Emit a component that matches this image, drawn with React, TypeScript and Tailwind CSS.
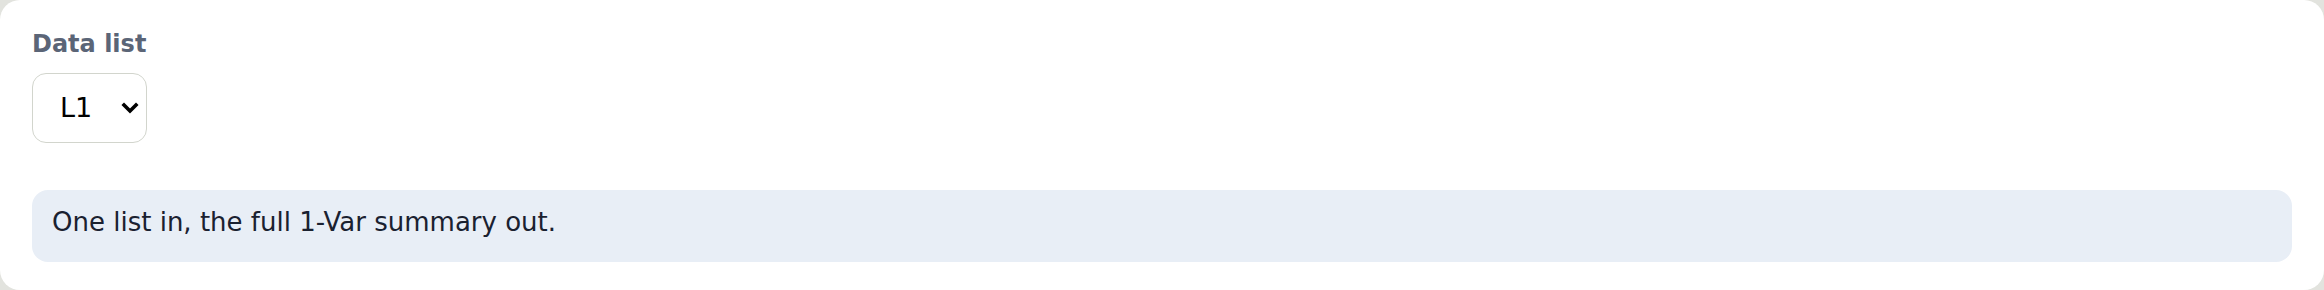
import { useState } from 'react'

export default function App() {
  const [list, setList] = useState('L1')

  return (
    <div className="w-full h-[290px] bg-[#e2e3de]" style={{ fontFamily: '"DejaVu Sans", sans-serif' }}>
      <div className="h-full rounded-[20px] bg-white pl-[32px] pr-[32px] pt-[26px]">
        {/* field */}
        <label className="block text-[24px] leading-[36px] font-bold text-[#5b6577]">Data list</label>
        <div className="mt-[11px] flex items-center w-[115px] h-[70px] rounded-[14px] border-[1.5px] border-[#d2d5cd] bg-white pl-[27px] pr-[6px]">
          <select
            value={list}
            onChange={e => setList(e.target.value)}
            className="appearance-none bg-transparent outline-none text-[27px] text-black flex-1 min-w-0"
          >
            <option>L1</option>
            <option>L2</option>
            <option>L3</option>
          </select>
          <svg width="20" height="14" viewBox="0 0 20 14" className="shrink-0 pointer-events-none">
            <path d="M4 4 L10 10 L16 4" fill="none" stroke="#000" strokeWidth="3.6" strokeLinecap="square" />
          </svg>
        </div>

        {/* hint */}
        <div className="mt-[47px] rounded-[16px] bg-[#e8eef6] pl-[20px] pt-[13px] pb-[20px] text-[26px] leading-[39px] text-[#1a2130]">
          One list in, the full 1-Var summary out.
        </div>
      </div>
    </div>
  )
}
